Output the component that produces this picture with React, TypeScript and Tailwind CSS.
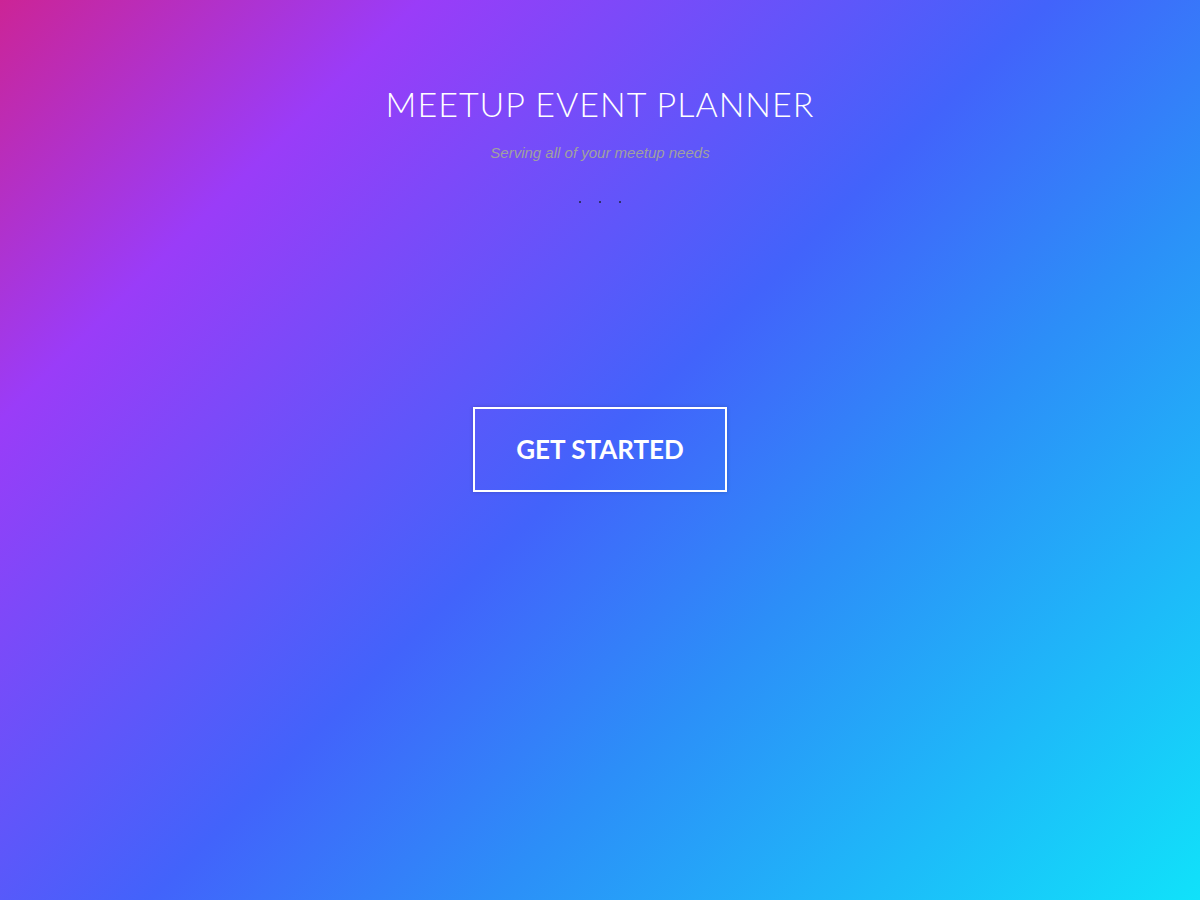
export default function App() {
    return (
        <div className="min-h-[900px] w-full bg-[linear-gradient(135deg,#cc2496_0%,#9a3cf8_20%,#4263fb_50%,#2c8ef8_66%,#10e2fa_100%)] flex flex-col items-center">
            <h1 className="mt-[83px] text-[34px] leading-[42px] font-light text-white tracking-[1px] font-['Lato',sans-serif]">
                MEETUP EVENT PLANNER
            </h1>
            <p className="mt-[19px] text-[15px] leading-[18px] italic text-[#a0a0a0] font-['Liberation_Sans',sans-serif]">
                Serving all of your meetup needs
            </p>
            <div className="mt-[39px] flex gap-[18px]">
                <span className="w-[2px] h-[2px] bg-[#30306e]" />
                <span className="w-[2px] h-[2px] bg-[#30306e]" />
                <span className="w-[2px] h-[2px] bg-[#30306e]" />
            </div>
            <button className="mt-[204px] w-[254px] h-[85px] border-2 border-white text-white text-[26px] font-bold font-['Lato',sans-serif] shadow-[0_0_4px_rgba(0,0,0,0.2)]">
                GET STARTED
            </button>
        </div>
    );
}
